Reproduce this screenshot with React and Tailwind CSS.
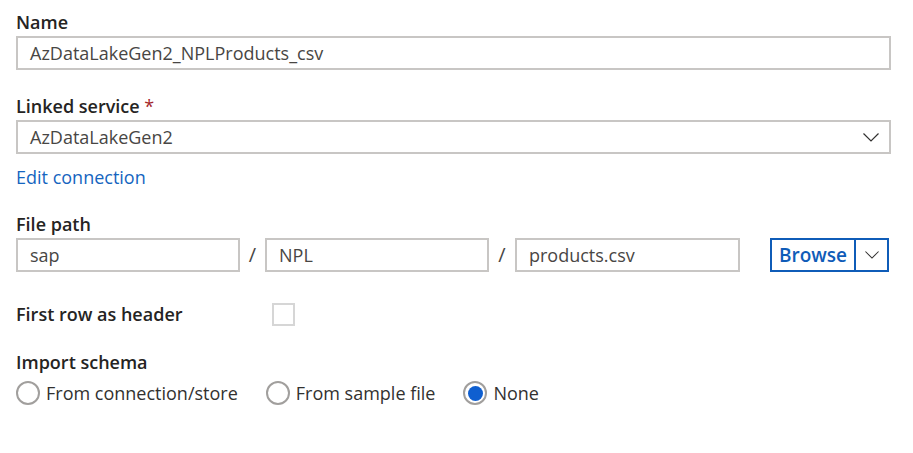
import React from "react";

const font = { fontFamily: '"Open Sans", "Noto Sans", sans-serif' };

function Chevron({ className }) {
  return (
    <svg viewBox="0 0 16 9" className={className} fill="none" stroke="#323130" strokeWidth="1.2">
      <polyline points="0.5,0.5 8,8 15.5,0.5" />
    </svg>
  );
}

function TextBox({ value, className = "" }) {
  return (
    <div className={`h-[34px] border-2 border-[#c8c6c4] bg-white flex items-center pl-[12px] text-[18px] text-[#484644] ${className}`}>
      {value}
    </div>
  );
}

function Radio({ checked, label }) {
  return (
    <div className="flex items-center gap-[6px]">
      <span className="w-[24px] h-[24px] rounded-full border-2 border-[#a19f9d] bg-white flex items-center justify-center">
        {checked && <span className="w-[15px] h-[15px] rounded-full bg-[#0f5fd0]" />}
      </span>
      <span className="text-[18px] text-[#323130] leading-6">{label}</span>
    </div>
  );
}

export default function App() {
  return (
    <div className="w-[913px] h-[453px] bg-white pl-4 pr-[22px] pt-[10px]" style={font}>
      <div className="text-[18px] font-semibold leading-6 text-[#252423]">Name</div>
      <TextBox value="AzDataLakeGen2_NPLProducts_csv" className="mt-[2px]" />

      <div className="mt-[24px] text-[18px] font-semibold leading-6 text-[#252423]">
        Linked service <span className="text-[#a4262c] font-normal">*</span>
      </div>
      <div className="mt-[2px] h-[34px] border-2 border-[#c8c6c4] flex items-center pl-[12px] pr-[10px] text-[18px] text-[#484644]">
        <span className="flex-1">AzDataLakeGen2</span>
        <Chevron className="w-[16px] h-[9px]" />
      </div>
      <div className="mt-[11px] text-[18px] leading-6 text-[#1565c0]">Edit connection</div>

      <div className="mt-[23px] text-[18px] font-semibold leading-6 text-[#252423]">File path</div>
      <div className="mt-[2px] flex items-center">
        <TextBox value="sap" className="w-[224px]" />
        <span className="w-[25px] text-center text-[20px] text-[#484644]">/</span>
        <TextBox value="NPL" className="w-[224px]" />
        <span className="w-[26px] text-center text-[20px] text-[#484644]">/</span>
        <TextBox value="products.csv" className="w-[225px]" />
        <div className="ml-[30px] flex h-[34px] border-2 border-[#0f5cb8]">
          <span className="w-[84px] flex items-center justify-center text-[19px] font-semibold text-[#0f5cb8] border-r-2 border-[#0f5cb8]">Browse</span>
          <span className="w-[31px] flex items-center justify-center">
            <Chevron className="w-[14px] h-[8px]" />
          </span>
        </div>
      </div>

      <div className="mt-[30px] flex items-center h-6">
        <span className="w-[256px] text-[18px] font-semibold text-[#252423]">First row as header</span>
        <span className="w-[23px] h-[23px] border-2 border-[#d6d6d6] bg-white" />
      </div>

      <div className="mt-[24px] text-[18px] font-semibold leading-6 text-[#252423]">Import schema</div>
      <div className="mt-[7px] flex items-center gap-[28px]">
        <Radio label="From connection/store" />
        <Radio label="From sample file" />
        <Radio checked label="None" />
      </div>
    </div>
  );
}
